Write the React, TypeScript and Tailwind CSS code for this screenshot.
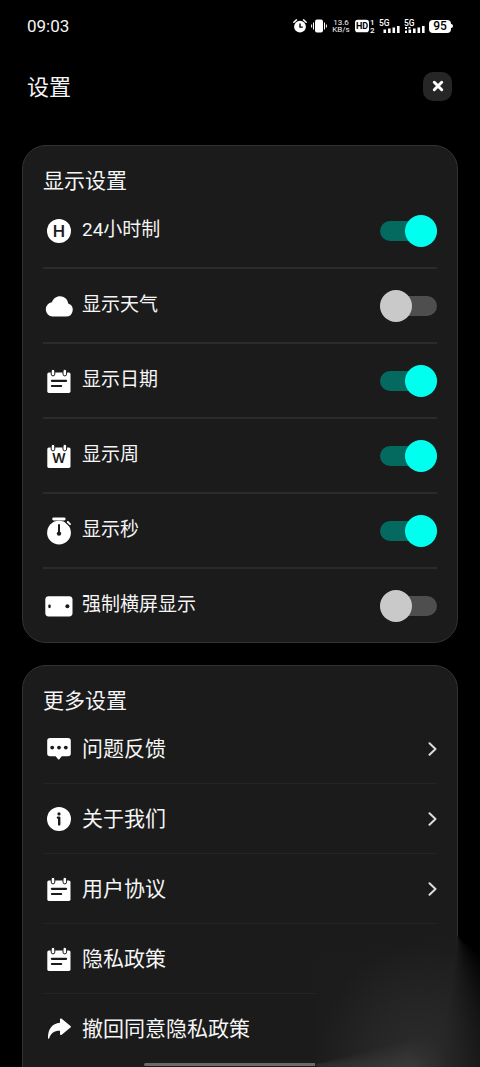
import { useState } from "react";
import type { ReactNode } from "react";

const FONT = "font-[Roboto,'Noto_Sans_CJK_SC',sans-serif]";
const INK = "#1b1b1b";

/* ---------- icons ---------- */

function Icon({ children }: { children: ReactNode }) {
  return (
    <svg viewBox="0 0 28 28" className="size-7 shrink-0" fill="#fff" aria-hidden="true">
      {children}
    </svg>
  );
}

function CalendarBody() {
  return (
    <>
      <rect x="2.3" y="5.5" width="23.2" height="20.4" rx="1.6" />
      <rect x="6.2" y="2.3" width="3.6" height="6.6" rx="1.8" stroke={INK} strokeWidth="1" />
      <rect x="18" y="2.3" width="3.6" height="6.6" rx="1.8" stroke={INK} strokeWidth="1" />
    </>
  );
}

const HourIcon = (
  <Icon>
    <circle cx="14" cy="14" r="12" />
    <text x="14" y="20" fontSize="16.5" fontWeight="600" textAnchor="middle" fill={INK} fontFamily="Inter, sans-serif">H</text>
  </Icon>
);

const CloudIcon = (
  <Icon>
    <path d="M7.5 24.6A7.2 7.2 0 0 1 6.9 10.3C8 6.700 11.2 4.2 15 4.2c4.2 0 7.7 3.1 8.2 7.2a6.8 6.8 0 0 1-2.2 13.2z" />
  </Icon>
);

const NoteIcon = (
  <Icon>
    <CalendarBody />
    <path d="M6.9 13.8H21.1M6.9 19H16.2" stroke={INK} strokeWidth="2.2" strokeLinecap="round" />
  </Icon>
);

const WeekIcon = (
  <Icon>
    <CalendarBody />
    <text x="13.9" y="21.3" fontSize="13.5" fontWeight="600" textAnchor="middle" fill={INK} fontFamily="Inter, sans-serif">W</text>
  </Icon>
);

const TimerIcon = (
  <Icon>
    <rect x="7.2" y="0.6" width="13.4" height="2.9" rx="1.4" />
    <circle cx="14" cy="15.7" r="11.9" />
    <path d="M20.8 5.4l4 3.6" stroke={INK} strokeWidth="1.2" />
    <path d="M22.8 5l2.2 2.1" stroke="#fff" strokeWidth="2" strokeLinecap="round" />
    <path d="M14 8v8" stroke={INK} strokeWidth="2" strokeLinecap="round" />
    <circle cx="14" cy="16.6" r="2.2" fill={INK} />
  </Icon>
);

const LandscapeIcon = (
  <Icon>
    <rect x="0.3" y="4.2" width="27.2" height="20.3" rx="3.4" />
    <rect x="3.3" y="12.4" width="2.4" height="3.8" rx="1.1" fill={INK} />
    <circle cx="22.4" cy="14.3" r="2" fill={INK} />
  </Icon>
);

const ChatIcon = (
  <Icon>
    <path d="M5 3h18a2.8 2.8 0 0 1 2.8 2.8v12.7a2.8 2.8 0 0 1-2.8 2.8h-6.2l-2.5 3a.8.8 0 0 1-1.2 0l-2.5-3H5a2.8 2.8 0 0 1-2.8-2.8V5.8A2.8 2.8 0 0 1 5 3z" />
    <circle cx="7.2" cy="12.6" r="1.9" fill={INK} />
    <circle cx="14" cy="12.6" r="1.9" fill={INK} />
    <circle cx="20.8" cy="12.6" r="1.9" fill={INK} />
  </Icon>
);

const InfoIcon = (
  <Icon>
    <circle cx="14" cy="14" r="12" />
    <circle cx="14" cy="8.9" r="1.6" fill={INK} />
    <path d="M12.9 12.6H14.2V19.4" fill="none" stroke={INK} strokeWidth="2.4" strokeLinecap="round" strokeLinejoin="round" />
  </Icon>
);

const ShareIcon = (
  <Icon>
    <path d="M15 4.4c0-.9 1-1.3 1.7-.7l8.8 7.2c.6.5.6 1.2 0 1.7l-8.8 7.2c-.7.6-1.7.2-1.7-.7v-3.3c-5.4-.2-8.8 2-10.8 7.400-.3.9-1.2.7-1.2-.2C2.8 14.5 7 8.4 15 7.8z" />
  </Icon>
);

/* ---------- status bar ---------- */

function Signal({ dotted = false }: { dotted?: boolean }) {
  return (
    <svg viewBox="0 0 21 16" className="h-4 w-[21px]" fill="#fff" aria-hidden="true">
      <text x="0" y="8" fontSize="8.5" fontWeight="500" fontFamily="Roboto, sans-serif">5G</text>
      <rect x="4.5" y="11.5" width="2.6" height="3.5" />
      <rect x="9" y="10.5" width="2.6" height="4.5" />
      <rect x="13.5" y="9.5" width="2.6" height="5.5" />
      <rect x="18" y="8" width="2.6" height="7" />
      {dotted && <path d="M1 9h2v2H1zM1 12.5h2v2.5H1zM4.5 9h2v1.5h-2z" />}
    </svg>
  );
}

function StatusBar() {
  return (
    <div className="flex h-[52px] shrink-0 items-center justify-between px-[27px]">
      <time className="text-[17px] leading-5">09:03</time>
      <div className="flex items-center gap-1">
        <svg viewBox="0 0 14 14" className="size-3.5" aria-hidden="true">
          <circle cx="7" cy="7.7" r="5.9" fill="#fff" />
          <path d="M.8 3.2L3.4.9M13.2 3.2L10.6.9" stroke="#fff" strokeWidth="1.5" strokeLinecap="round" />
          <path d="M7 4.5v3.6h2.8" fill="none" stroke="#000" strokeWidth="1.4" />
        </svg>
        <svg viewBox="0 0 16 14" className="h-3.5 w-4" aria-hidden="true">
          <rect x="4" y=".5" width="8" height="13" rx="2" fill="#fff" />
          <path d="M2.5 3.5v7M13.5 3.5v7M.6 5.5v3M15.4 5.5v3" stroke="#fff" strokeWidth="1" />
        </svg>
        <div className="flex w-5 flex-col items-center text-[8px] leading-[7px]">
          <span>13.6</span>
          <span>KB/s</span>
        </div>
        <svg viewBox="0 0 20 14" className="h-3.5 w-5" fill="#fff" fontFamily="Roboto, sans-serif" aria-hidden="true">
          <rect x="0" y=".8" width="14" height="12.4" rx="2.8" />
          <text x="7" y="10.2" fontSize="9" fontWeight="700" textAnchor="middle" fill="#000">HD</text>
          <text x="15" y="6.3" fontSize="8" fontWeight="500">1</text>
          <text x="15" y="13.5" fontSize="8" fontWeight="500">2</text>
        </svg>
        <Signal />
        <Signal dotted />
        <div className="flex items-center">
          <span className="flex h-[13px] w-[22px] items-center justify-center rounded-[4px] bg-white text-[12px] leading-[13px] font-medium text-black">95</span>
          <span className="h-1 w-0.5 rounded-r-sm bg-white" />
        </div>
      </div>
    </div>
  );
}

/* ---------- rows ---------- */

const TOGGLES = [
  { id: "hour24", label: "24小时制", icon: HourIcon, on: true },
  { id: "weather", label: "显示天气", icon: CloudIcon, on: false },
  { id: "date", label: "显示日期", icon: NoteIcon, on: true },
  { id: "week", label: "显示周", icon: WeekIcon, on: true },
  { id: "second", label: "显示秒", icon: TimerIcon, on: true },
  { id: "landscape", label: "强制横屏显示", icon: LandscapeIcon, on: false },
];

const LINKS = [
  { id: "feedback", label: "问题反馈", icon: ChatIcon },
  { id: "about", label: "关于我们", icon: InfoIcon },
  { id: "agreement", label: "用户协议", icon: NoteIcon },
  { id: "privacy", label: "隐私政策", icon: NoteIcon },
  { id: "revoke", label: "撤回同意隐私政策", icon: ShareIcon },
];

function ToggleRow({ id, label, icon, on }: (typeof TOGGLES)[number]) {
  const [checked, setChecked] = useState(on);
  return (
    <li className="flex h-[75px] items-center gap-[9px] border-b-2 border-[#2b2b2b] pl-0.5 last:h-[73px] last:border-b-0">
      {icon}
      <label htmlFor={id} className="flex-1 pb-0.5 text-[19px] leading-6">{label}</label>
      <input
        id={id}
        type="checkbox"
        role="switch"
        checked={checked}
        onChange={(e) => setChecked(e.target.checked)}
        className="relative h-5 w-[57px] shrink-0 cursor-pointer appearance-none rounded-full bg-[#4e4e4e] before:absolute before:-top-1.5 before:left-0 before:size-8 before:rounded-full before:bg-[#c9c9c9] before:transition-all checked:bg-[#046a60] checked:before:left-[25px] checked:before:bg-[#00ffee]"
      />
    </li>
  );
}

function Card({ title, children }: { title: string; children: ReactNode }) {
  return (
    <section className="shrink-0 rounded-3xl border border-[#333] bg-[#1b1b1b] px-5 pt-[22px]">
      <h2 className="text-[21px] leading-[26px]">{title}</h2>
      <ul>{children}</ul>
    </section>
  );
}

export default function App() {
  return (
    <div className={`relative flex h-screen flex-col overflow-hidden bg-black text-[#f5f5f5] ${FONT}`}>
      <StatusBar />

      <header className="flex h-[68px] shrink-0 items-center justify-between pr-7 pl-[27px]">
        <h1 className="pt-1 text-[22px] leading-8">设置</h1>
        <button type="button" aria-label="关闭" className="flex size-[29px] items-center justify-center rounded-[10px] bg-[#262626]">
          <svg viewBox="0 0 12 12" className="size-3" aria-hidden="true">
            <path d="M2.3 2.3l7.4 7.4M9.7 2.3l-7.4 7.4" stroke="#fff" strokeWidth="3" strokeLinecap="round" />
          </svg>
        </button>
      </header>

      <main className="flex min-h-0 flex-1 flex-col gap-[22px] overflow-y-auto px-[22px] pt-[25px] [scrollbar-width:none]">
        <Card title="显示设置">
          {TOGGLES.map((item) => (
            <ToggleRow key={item.id} {...item} />
          ))}
        </Card>

        <Card title="更多设置">
          {LINKS.map((item) => (
            <li key={item.id} className="border-b border-[#252525] last:border-transparent last:pb-6">
              <a href={`#${item.id}`} className="flex h-[69px] items-center gap-[9px] pl-0.5">
                {item.icon}
                <span className="flex-1 text-[21px] leading-7">{item.label}</span>
                <svg viewBox="0 0 10 14" className="h-3.5 w-2.5" fill="none" stroke="#dcdcdc" strokeWidth="2" strokeLinecap="round" strokeLinejoin="round" aria-hidden="true">
                  <path d="M2.5 1.2L8.5 7l-6 5.8" />
                </svg>
              </a>
            </li>
          ))}
        </Card>
      </main>

      {/* gesture bar */}
      <div className="absolute bottom-px left-[30%] h-[3px] w-2/5 rounded-full bg-[#6a6a6a]" />

      {/* smudged corner */}
      <div className="pointer-events-none absolute right-0 bottom-0 h-[131px] w-[165px] bg-[conic-gradient(from_90deg_at_143px_0,#000_0deg,#000_40deg,#0e0e0e_72deg,#1d1d1d_98deg,#1b1b1b_180deg,#000_181deg)]">
        <div className="absolute inset-0 bg-[radial-gradient(ellipse_100px_125px_at_100px_131px,#ffffff12,#ffffff0a_50%,transparent)]" />
        <div className="absolute bottom-0 left-0 h-8 w-[132px] bg-[conic-gradient(from_74deg_at_0_29px,transparent_0deg,#ffffff10_16deg,#ffffff10_40deg,transparent_80deg)] [mask-image:linear-gradient(to_right,#000_70%,transparent)]" />
      </div>
    </div>
  );
}
